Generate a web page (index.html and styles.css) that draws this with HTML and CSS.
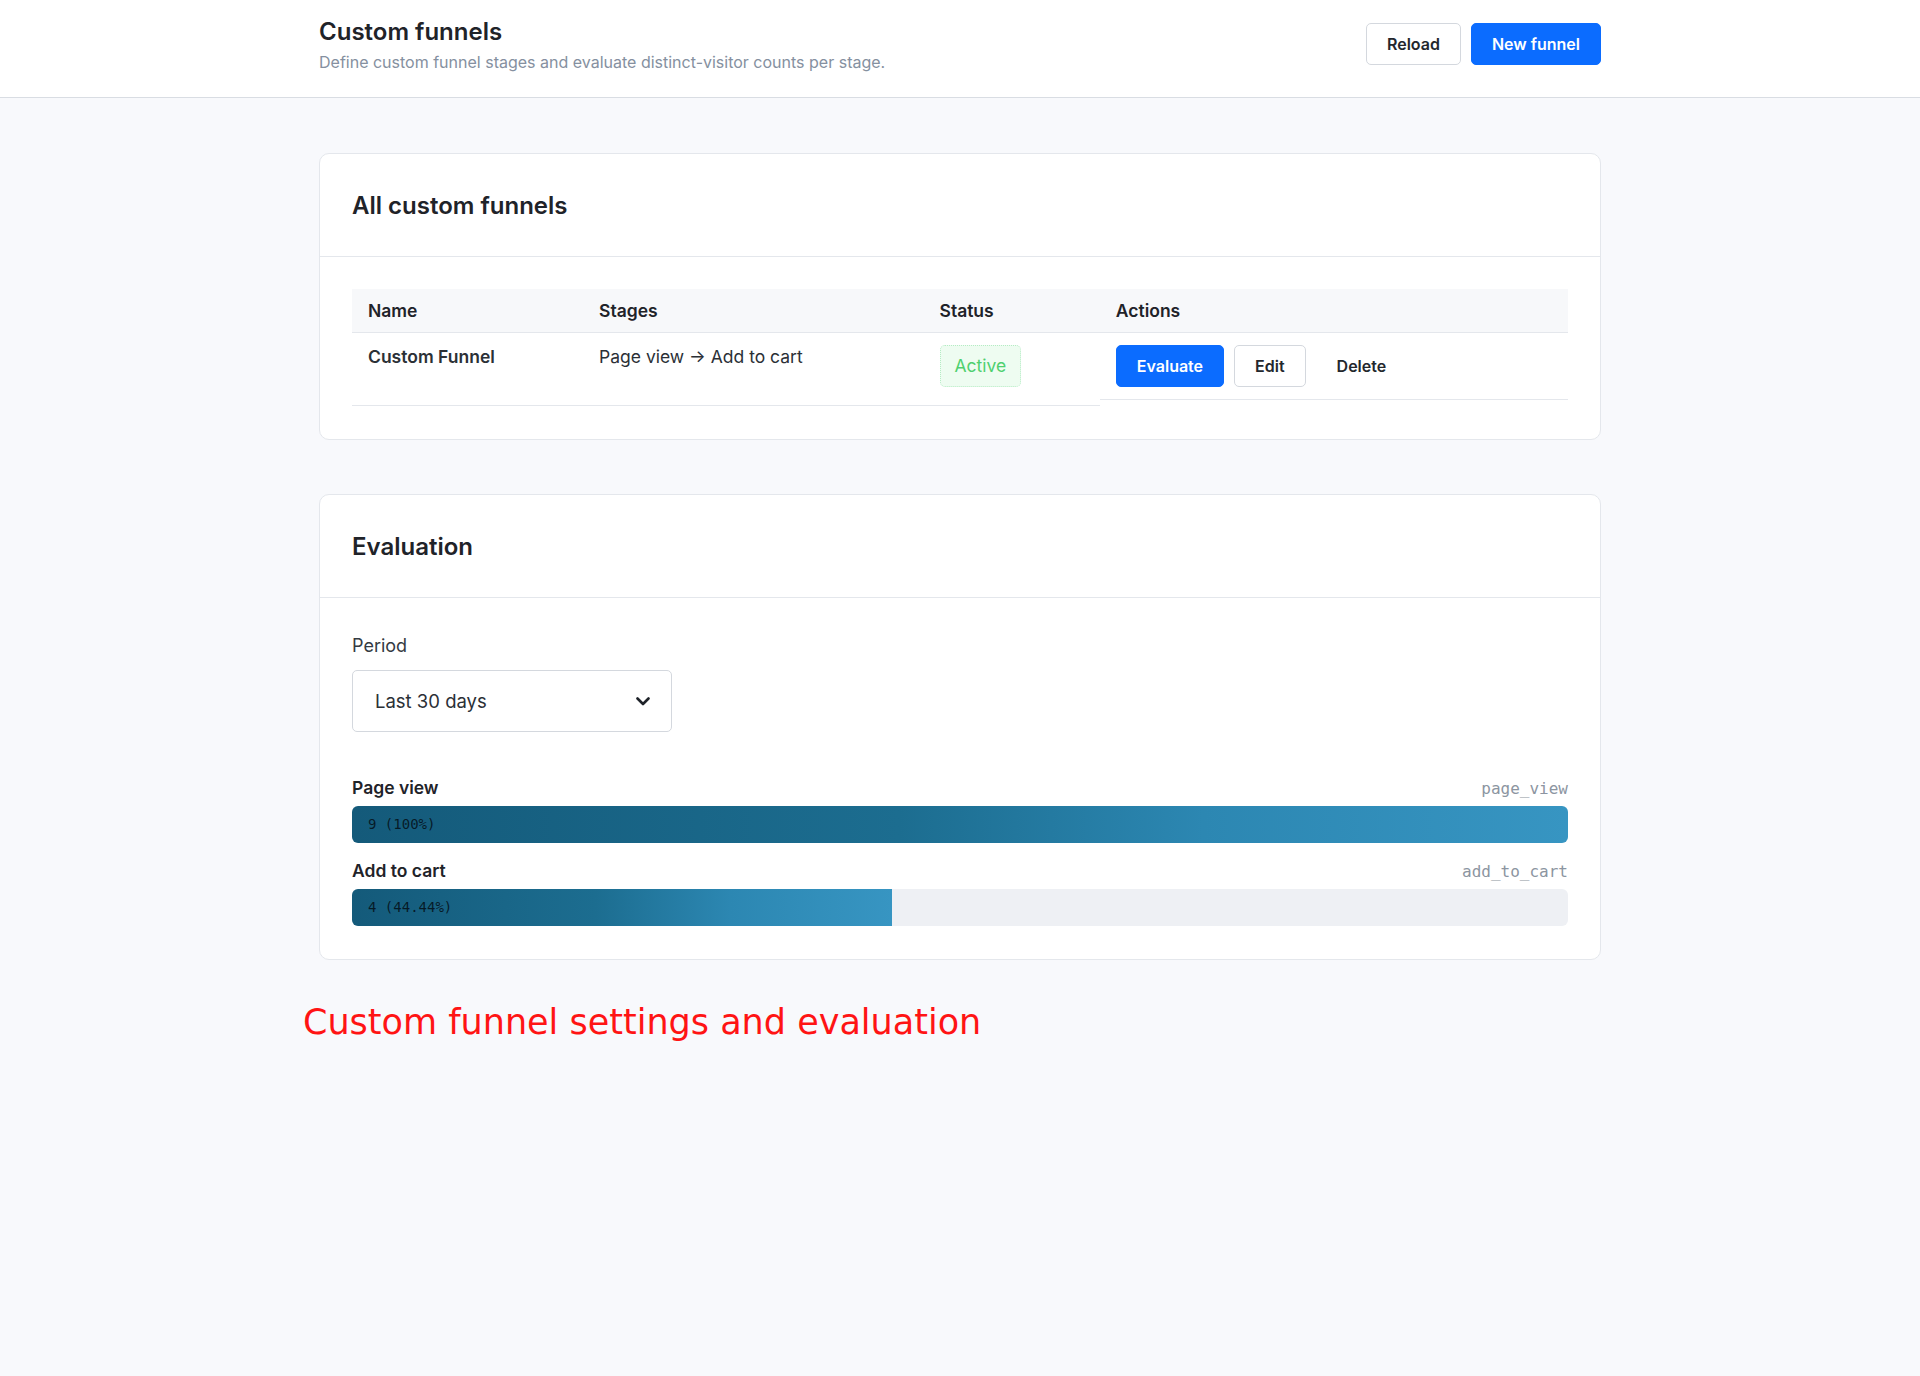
FILE: index.html
```html
<!DOCTYPE html>
<html>
<head>
  <title>Custom funnels</title>
  <link rel="stylesheet" href="styles.css">
</head>
<body>
  <header class="topbar">
    <div class="topbar-inner">
      <div>
        <h1>Custom funnels</h1>
        <p class="subtitle">Define custom funnel stages and evaluate distinct-visitor counts per stage.</p>
      </div>
      <div class="topbar-actions">
        <button class="btn btn-outline">Reload</button>
        <button class="btn btn-primary">New funnel</button>
      </div>
    </div>
  </header>

  <main class="page">
    <section class="card">
      <div class="card-header">
        <h2>All custom funnels</h2>
      </div>
      <div class="card-body">
        <table class="funnel-table">
          <thead>
            <tr>
              <th class="col-name">Name</th>
              <th class="col-stages">Stages</th>
              <th class="col-status">Status</th>
              <th>Actions</th>
            </tr>
          </thead>
          <tbody>
            <tr>
              <td class="cell-name">Custom Funnel</td>
              <td>Page view &rarr; Add to cart</td>
              <td><span class="badge">Active</span></td>
              <td class="actions">
                <button class="btn btn-primary">Evaluate</button>
                <button class="btn btn-outline">Edit</button>
                <button class="btn btn-plain">Delete</button>
              </td>
            </tr>
          </tbody>
        </table>
      </div>
    </section>

    <section class="card">
      <div class="card-header">
        <h2>Evaluation</h2>
      </div>
      <div class="card-body">
        <label class="field-label" for="period">Period</label>
        <div class="select-wrap">
          <select id="period" class="select">
            <option>Last 30 days</option>
            <option>Last 7 days</option>
            <option>Last 90 days</option>
          </select>
          <svg class="chevron" width="14" height="9" viewBox="0 0 14 9">
            <path d="M1.5 1.5 L7 7 L12.5 1.5" fill="none" stroke="#1f2329" stroke-width="2.6" stroke-linecap="round" stroke-linejoin="round"/>
          </svg>
        </div>

        <div class="stages">
          <div class="stage">
            <div class="stage-head">
              <span class="stage-name">Page view</span>
              <span class="stage-key">page_view</span>
            </div>
            <div class="bar-track">
              <div class="bar-fill" style="width: 100%">9 (100%)</div>
            </div>
          </div>
          <div class="stage">
            <div class="stage-head">
              <span class="stage-name">Add to cart</span>
              <span class="stage-key">add_to_cart</span>
            </div>
            <div class="bar-track">
              <div class="bar-fill" style="width: 44.44%">4 (44.44%)</div>
            </div>
          </div>
        </div>
      </div>
    </section>
  </main>

  <p class="note">Custom funnel settings and evaluation</p>
</body>
</html>
```

FILE: styles.css
```css
body {
  margin: 0;
  font-family: Inter, "Noto Sans", sans-serif;
  font-size: 16px;
  line-height: 1.5;
  color: #1f2329;
  background-color: #f8f9fc;
}
.topbar {
  background-color: white;
  border-bottom: 1px solid #d9dde3;
}
.topbar-inner {
  max-width: 1282px;
  margin: 0 auto;
  padding: 17px 0 24px;
  display: flex;
  justify-content: space-between;
  align-items: center;
}
h1 {
  margin: 0;
  font-size: 24px;
  line-height: 30px;
  font-weight: 600;
}
.subtitle {
  margin: 4px 0 0;
  font-size: 16px;
  line-height: 22px;
  color: #8590a0;
}
.topbar-actions {
  display: flex;
  gap: 10px;
  margin-top: -3px;
}
.btn {
  font-family: inherit;
  font-size: 16px;
  line-height: 24px;
  font-weight: 600;
  padding: 8px 20px;
  border: 1px solid transparent;
  border-radius: 5px;
  cursor: pointer;
  background: none;
  color: #23272d;
}
.btn-primary {
  background-color: #0b6cff;
  border-color: #0b6cff;
  color: white;
}
.btn-outline {
  background-color: white;
  border-color: #d4d8de;
}
.page {
  max-width: 1282px;
  margin: 0 auto;
  padding-top: 55px;
}
.card {
  background-color: white;
  border: 1px solid #e4e7ec;
  border-radius: 10px;
  margin-bottom: 54px;
}
.card:last-child {
  margin-bottom: 0;
}
.card-header {
  padding: 33px 32px 32px;
  border-bottom: 1px solid #e4e7ec;
}
h2 {
  margin: 0;
  font-size: 24px;
  line-height: 37px;
  font-weight: 600;
}
.card-body {
  padding: 32px 32px 33px;
}
.funnel-table {
  width: 100%;
  border-collapse: collapse;
  text-align: left;
  font-size: 17.5px;
}
.funnel-table th {
  padding: 10px 16px;
  line-height: 23px;
  font-weight: 600;
  background-color: #f7f8fa;
  border-bottom: 1px solid #e4e7ec;
}
.col-name { width: 19%; }
.col-stages { width: 28%; }
.col-status { width: 14.5%; }
.funnel-table td {
  padding: 12px 16px;
  line-height: 24px;
  vertical-align: top;
  border-bottom: 1px solid #e4e7ec;
  color: #2b3036;
}
.cell-name {
  font-weight: 600;
}
.funnel-table td.actions {
  display: flex;
  gap: 10px;
  align-items: center;
}
.badge {
  display: inline-block;
  vertical-align: top;
  margin-bottom: 6px;
  padding: 8px 14px;
  border: 1px dotted #b5ecc4;
  border-radius: 5px;
  background-color: #eefcf1;
  color: #4fd06f;
}
.field-label {
  display: block;
  font-size: 18px;
  line-height: 27px;
  color: #343a42;
  margin-top: 2px;
}
.select-wrap {
  position: relative;
  width: 320px;
  margin-top: 11px;
}
.select {
  appearance: none;
  width: 100%;
  padding: 17px 22px 16px;
  font-family: inherit;
  font-size: 18.5px;
  line-height: 27px;
  color: #2b3036;
  background-color: white;
  border: 1px solid #d4d8de;
  border-radius: 5px;
}
.chevron {
  position: absolute;
  right: 22px;
  top: 27px;
  pointer-events: none;
}
.stages {
  margin-top: 44px;
}
.stage {
  margin-bottom: 16px;
}
.stage:last-child {
  margin-bottom: 0;
}
.stage-head {
  display: flex;
  justify-content: space-between;
  align-items: baseline;
  line-height: 24px;
  margin-bottom: 5px;
}
.stage-name {
  font-weight: 600;
  font-size: 17.5px;
}
.stage-key {
  font-family: "DejaVu Sans Mono", monospace;
  font-size: 16px;
  color: #8c95a1;
}
.bar-track {
  height: 37px;
  border-radius: 6px;
  background-color: #eef0f4;
  overflow: hidden;
}
.bar-fill {
  height: 100%;
  padding-left: 16px;
  box-sizing: border-box;
  line-height: 37px;
  font-family: "DejaVu Sans Mono", monospace;
  font-size: 14px;
  color: rgba(4, 14, 22, 0.85);
  background: linear-gradient(90deg, #145a7a 0%, #1c6d90 45%, #2c87b2 70%, #3795c2 100%);
}
.note {
  max-width: 1314px;
  margin: 40px auto 0;
  font-family: "DejaVu Sans", sans-serif;
  font-size: 35px;
  line-height: 44px;
  color: #ff1414;
}
```
